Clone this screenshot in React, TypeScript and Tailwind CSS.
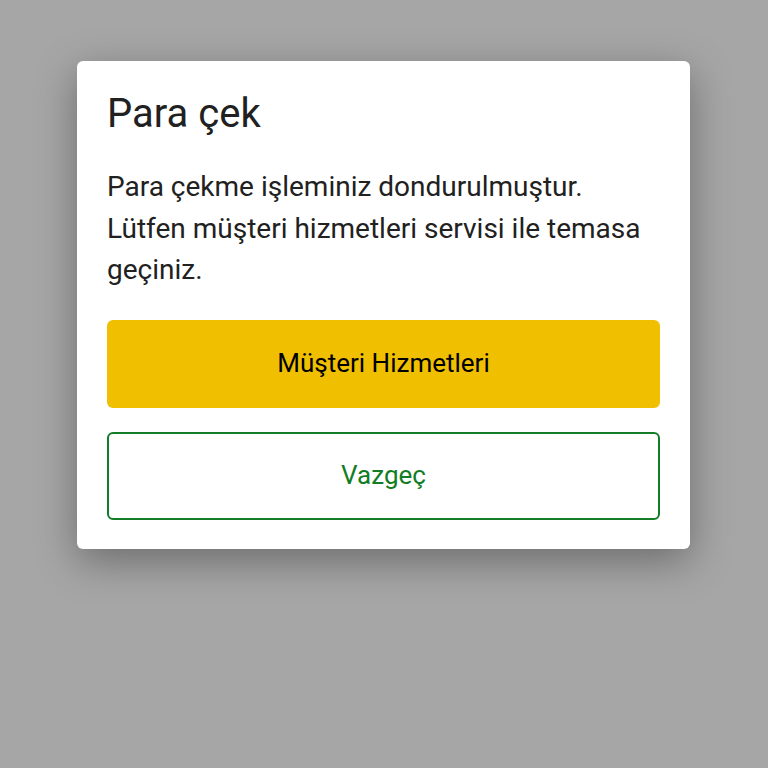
export default function App() {
  return (
    <div
      className="min-h-[768px] w-full bg-[#a6a6a6] px-[77px] pt-[61px]"
      style={{ fontFamily: 'Roboto, "Noto Sans", sans-serif' }}
    >
      {/* Withdraw dialog */}
      <div className="w-[613px] rounded-[6px] bg-white px-[30px] pb-[29px] pt-[28px] shadow-[0_12px_40px_rgba(0,0,0,0.35)]">
        <h2 className="text-[40px] leading-[50px] text-[#212121]">Para çek</h2>
        <p className="mt-[27px] text-[28px] leading-[41.5px] text-[#212121]">
          Para çekme işleminiz dondurulmuştur. Lütfen müşteri hizmetleri servisi ile temasa geçiniz.
        </p>
        <div className="mt-[29px] flex flex-col gap-[24px]">
          <button className="h-[88px] w-full rounded-[6px] bg-[#f0c000] text-[26px] text-black">
            Müşteri Hizmetleri
          </button>
          <button className="h-[88px] w-full rounded-[6px] border-2 border-[#127d25] bg-white text-[26px] text-[#127d25]">
            Vazgeç
          </button>
        </div>
      </div>
    </div>
  );
}
